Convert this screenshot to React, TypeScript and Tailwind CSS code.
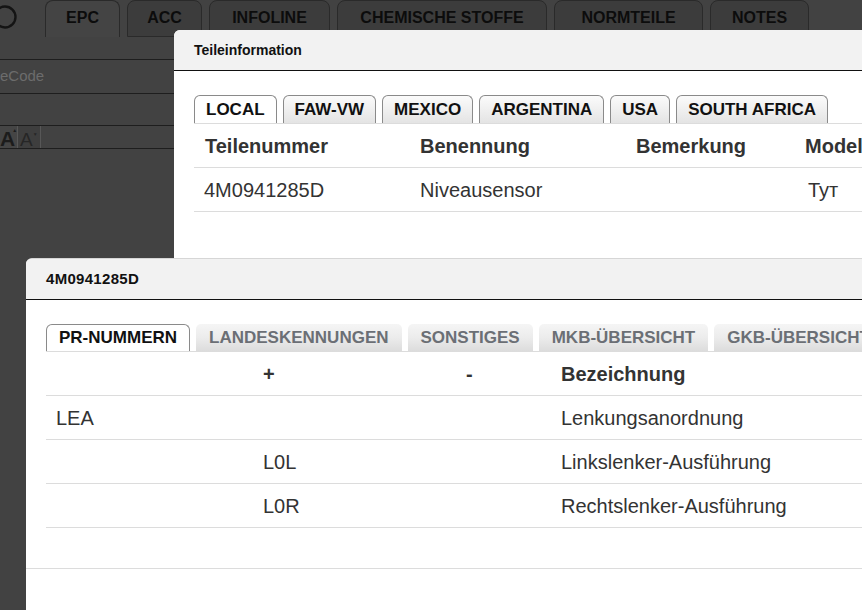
import React from 'react';

const topTabs = [
  { label: 'EPC', cls: 'w-[75px]', active: true },
  { label: 'ACC', cls: 'w-[75px]' },
  { label: 'INFOLINE', cls: 'w-[121px]' },
  { label: 'CHEMISCHE STOFFE', cls: 'w-[210px]' },
  { label: 'NORMTEILE', cls: 'w-[149px]' },
  { label: 'NOTES', cls: 'w-[99px]' },
];

const regionTabs = ['LOCAL', 'FAW-VW', 'MEXICO', 'ARGENTINA', 'USA', 'SOUTH AFRICA'];
const infoTabs = ['PR-NUMMERN', 'LANDESKENNUNGEN', 'SONSTIGES', 'MKB-ÜBERSICHT', 'GKB-ÜBERSICHT'];

const prRows = [
  { a: 'LEA', b: '', c: '', d: 'Lenkungsanordnung' },
  { a: '', b: 'L0L', c: '', d: 'Linkslenker-Ausführung' },
  { a: '', b: 'L0R', c: '', d: 'Rechtslenker-Ausführung' },
];

export default function App() {
  return (
    <div className="relative w-[862px] h-[610px] overflow-hidden bg-[#424242] font-['Liberation_Sans',Arial,sans-serif]">
      {/* background app: top tabs */}
      <div className="flex items-start h-[37px]">
        <div className="ml-[-7px] mt-[5px] w-[24px] h-[24px] shrink-0">
          <svg width="24" height="24" viewBox="0 0 24 24">
            <circle cx="12" cy="12" r="10.5" fill="none" stroke="#141414" strokeWidth="2.4" />
          </svg>
        </div>
        <div className="flex gap-[7px] ml-[28px]">
          {topTabs.map((t) => (
            <div
              key={t.label}
              className={
                t.active
                  ? `${t.cls} h-[37px] flex items-center justify-center rounded-t-[8px] border border-b-0 border-[#2a2a2a] bg-[#444444] text-[16px] font-bold text-[#0c0c0c]`
                  : `${t.cls} h-[37px] flex items-center justify-center rounded-t-[8px] border border-[#2a2a2a] bg-[#3c3c3c] text-[16px] font-bold text-[#0c0c0c]`
              }
            >
              <span className="mb-[2px]">{t.label}</span>
            </div>
          ))}
        </div>
      </div>

      {/* background app: left panel */}
      <div className="w-[175px]">
        <div className="h-[23px] border-b border-[#1e1e1e]" />
        <div className="h-[34px] border-b border-[#1e1e1e] flex items-center">
          <span className="text-[15px] text-[#6c6c6c]">eCode</span>
        </div>
        <div className="h-[32px] border-b border-[#1e1e1e]" />
        <div className="h-[23px] border-b border-[#1e1e1e] flex">
          <div className="w-[18px] h-full flex items-start border-r border-[#575757] bg-[#454545] pt-[2px] overflow-hidden">
            <span className="text-[21px] font-bold text-[#1c1c1c] leading-none">A</span>
            <span className="text-[5px] text-[#1c1c1c] leading-none ml-[-3px]">▲</span>
          </div>
          <div className="w-[23px] h-full flex items-start border-r border-[#575757] bg-[#3e3e3e] pt-[4px] pl-[2px]">
            <span className="text-[19px] text-[#262626] leading-none">A</span>
            <span className="text-[5px] text-[#262626] leading-none mt-[2px]">▼</span>
          </div>
        </div>
      </div>

      {/* modal 1: Teileinformation */}
      <div className="absolute left-[174px] top-[30px] w-[720px] h-[300px] bg-white rounded-tl-[6px] overflow-hidden">
        <div className="h-[41px] bg-[#f2f2f2] border-b border-[#111] flex items-center pl-[20px]">
          <span className="text-[14px] font-bold text-[#111]">Teileinformation</span>
        </div>
        <div className="pt-[24px] pl-[20px]">
          <div className="flex gap-[6px] border-b border-[#dcdcdc]">
            {regionTabs.map((t, i) => (
              <div
                key={t}
                className={
                  i === 0
                    ? 'h-[28px] px-[11px] flex items-center rounded-t-[6px] border border-b-0 border-[#8a8a8a] bg-white text-[17px] font-bold text-[#111]'
                    : 'h-[28px] px-[11px] flex items-center rounded-t-[6px] border border-b-0 border-[#8a8a8a] bg-gradient-to-b from-[#fbfbfb] to-[#e4e4e4] text-[17px] font-bold text-[#111]'
                }
              >
                {t}
              </div>
            ))}
          </div>
          <div className="flex h-[44px] items-center border-b border-[#dcdcdc] text-[20px] font-bold text-[#333] whitespace-nowrap">
            <div className="w-[216px] pl-[11px] shrink-0">Teilenummer</div>
            <div className="w-[216px] pl-[10px] shrink-0">Benennung</div>
            <div className="w-[169px] pl-[10px] shrink-0">Bemerkung</div>
            <div className="pl-[10px] shrink-0">Modell</div>
          </div>
          <div className="flex h-[44px] items-center border-b border-[#dcdcdc] text-[20px] text-[#333] whitespace-nowrap">
            <div className="w-[216px] pl-[10px] shrink-0">4M0941285D</div>
            <div className="w-[216px] pl-[10px] shrink-0">Niveausensor</div>
            <div className="w-[169px] pl-[10px] shrink-0"></div>
            <div className="pl-[13px] shrink-0">Тут</div>
          </div>
        </div>
      </div>

      {/* modal 2: PR numbers */}
      <div className="absolute left-[26px] top-[258px] w-[860px] h-[360px] bg-white rounded-tl-[6px] overflow-hidden border-t border-[#d6d6d6]">
        <div className="h-[41px] bg-[#f2f2f2] border-b border-[#111] flex items-center pl-[20px]">
          <span className="text-[15px] font-bold text-[#111] tracking-[0.3px]">4M0941285D</span>
        </div>
        <div className="pt-[24px] pl-[20px]">
          <div className="flex gap-[6px] border-b border-[#dcdcdc] whitespace-nowrap">
            {infoTabs.map((t, i) => (
              <div
                key={t}
                className={
                  i === 0
                    ? 'h-[27px] px-[12px] flex items-center rounded-t-[6px] border border-b-0 border-[#8a8a8a] bg-white text-[17px] font-bold text-[#111] shrink-0'
                    : 'h-[27px] px-[13px] flex items-center rounded-t-[5px] bg-gradient-to-b from-[#f5f5f5] via-[#ececec] to-[#dcdcdc] text-[17px] font-bold text-[#6b6f75] shrink-0'
                }
              >
                {t}
              </div>
            ))}
          </div>
          <div className="flex h-[44px] items-center border-b border-[#dcdcdc] text-[20px] font-bold text-[#333]">
            <div className="w-[207px] pl-[10px]"></div>
            <div className="w-[203px] pl-[10px]">+</div>
            <div className="w-[95px] pl-[10px]">-</div>
            <div className="pl-[10px]">Bezeichnung</div>
          </div>
          {prRows.map((r, i) => (
            <div key={i} className="flex h-[44px] items-center border-b border-[#dcdcdc] text-[20px] text-[#333]">
              <div className="w-[207px] pl-[10px]">{r.a}</div>
              <div className="w-[203px] pl-[10px]">{r.b}</div>
              <div className="w-[95px] pl-[10px]">{r.c}</div>
              <div className="pl-[10px] whitespace-nowrap">{r.d}</div>
            </div>
          ))}
          <div className="h-[40px]" />
        </div>
        <div className="border-t border-[#dcdcdc] h-[60px]" />
      </div>
    </div>
  );
}
